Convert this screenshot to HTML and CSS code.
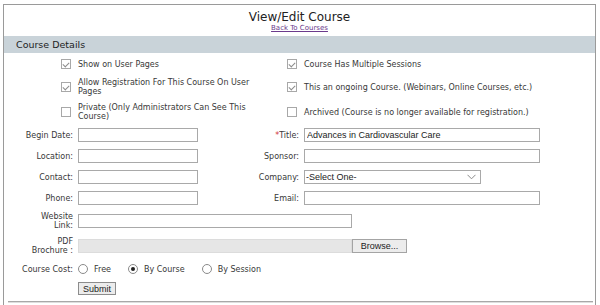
FILE: index.html
```html
<!DOCTYPE html>
<html lang="en">
<head>
    <meta charset="UTF-8">
    <title>View/Edit Course</title>
    <link rel="stylesheet" href="styles.css">
</head>
<body>
    <div class="panel">
        <div class="head">
            <h1>View/Edit Course</h1>
            <a href="#">Back To Courses</a>
        </div>
        <div class="band">Course Details</div>

        <form class="grid">
            <input type="checkbox" class="chk" checked>
            <label class="opt">Show on User Pages</label>
            <input type="checkbox" class="chk" checked>
            <label class="opt">Course Has Multiple Sessions</label>

            <input type="checkbox" class="chk" checked>
            <label class="opt">Allow Registration For This Course On User Pages</label>
            <input type="checkbox" class="chk" checked>
            <label class="opt">This an ongoing Course. (Webinars, Online Courses, etc.)</label>

            <input type="checkbox" class="chk">
            <label class="opt">Private (Only Administrators Can See This Course)</label>
            <input type="checkbox" class="chk">
            <label class="opt">Archived (Course is no longer available for registration.)</label>

            <label class="lbl">Begin Date:</label>
            <input type="text" class="txt short">
            <label class="lbl"><span class="req">*</span>Title:</label>
            <input type="text" class="txt long" value="Advances in Cardiovascular Care">

            <label class="lbl">Location:</label>
            <input type="text" class="txt short">
            <label class="lbl">Sponsor:</label>
            <input type="text" class="txt long">

            <label class="lbl">Contact:</label>
            <input type="text" class="txt short">
            <label class="lbl">Company:</label>
            <div class="sel">
                <select class="txt">
                    <option>-Select One-</option>
                </select>
                <svg class="chev" width="9" height="6" viewBox="0 0 9 6"><polyline points="0.5,0.8 4.5,4.8 8.5,0.8" fill="none" stroke="#8a8a8a" stroke-width="1"/></svg>
            </div>

            <label class="lbl">Phone:</label>
            <input type="text" class="txt short">
            <label class="lbl">Email:</label>
            <input type="text" class="txt long">

            <label class="lbl">Website<br>Link:</label>
            <div class="wide">
                <input type="text" class="txt web">
            </div>

            <label class="lbl">PDF<br>Brochure :</label>
            <div class="wide">
                <span class="file-bar"></span>
                <button type="button" class="browse">Browse...</button>
            </div>

            <label class="lbl">Course Cost:</label>
            <div class="wide radios">
                <input type="radio" name="cost" class="radio"><span class="rlbl">Free</span>
                <input type="radio" name="cost" class="radio" checked><span class="rlbl">By Course</span>
                <input type="radio" name="cost" class="radio"><span class="rlbl">By Session</span>
            </div>

            <span></span>
            <div class="wide">
                <button type="button" class="submit">Submit</button>
            </div>
        </form>

        <hr class="rule">
    </div>
</body>
</html>
```

FILE: styles.css
```css
* {
    box-sizing: border-box;
}
body {
    margin: 4px 4px 0 3px;
    background: #fff;
    color: #383838;
    font-family: "DejaVu Sans", Verdana, sans-serif;
    font-size: 8px;
}
.panel {
    border: 1px solid #9a9a9a;
    padding-bottom: 20px;
}

/* Header */
.head {
    text-align: center;
    padding: 5px 0 3px;
}
.head h1 {
    margin: 0;
    font-size: 12px;
    line-height: 14px;
    font-weight: normal;
    color: #222;
}
.head a {
    display: block;
    font-size: 7px;
    line-height: 9px;
    color: #6b3a8c;
}
.band {
    height: 17px;
    line-height: 17px;
    padding-left: 12px;
    background: #c9d3d9;
    color: #222;
    font-size: 9.5px;
}

/* Form grid */
.grid {
    display: grid;
    grid-template-columns: 69px 172px 44px 1fr;
    grid-auto-rows: minmax(14px, auto);
    column-gap: 5px;
    row-gap: 7px;
    align-items: center;
    padding-top: 4px;
    line-height: 9px;
}
.lbl {
    text-align: right;
    white-space: nowrap;
}
.req {
    color: #d0343c;
}
.chk {
    appearance: none;
    -webkit-appearance: none;
    justify-self: end;
    width: 10px;
    height: 10px;
    margin: 0 2px 0 0;
    border: 1px solid #a8a8a8;
    background: #fff;
}
.chk:checked::after {
    content: "";
    display: block;
    width: 3px;
    height: 5px;
    margin: 0.5px auto 0;
    border: solid #8c8c8c;
    border-width: 0 1px 1px 0;
    transform: rotate(45deg);
}

/* Fields */
.txt {
    height: 14px;
    margin: 0;
    padding: 0 2px;
    border: 1px solid #a9a9a9;
    background: #fff;
    color: #222;
    font-family: "Liberation Sans", Arial, sans-serif;
    font-size: 9px;
}
.short {
    width: 120px;
}
.long {
    width: 236px;
}
.web {
    width: 274px;
}
.sel {
    position: relative;
    width: 177px;
    height: 14px;
}
.sel select {
    appearance: none;
    -webkit-appearance: none;
    width: 177px;
    padding: 0 1px;
    border-radius: 0;
}
.chev {
    position: absolute;
    top: 4px;
    right: 5px;
}
.wide {
    grid-column: 2 / span 3;
    display: flex;
    align-items: center;
}
.file-bar {
    width: 274px;
    height: 14px;
    background: #e6e6e6;
    border: 1px solid #dcdcdc;
}
.browse,
.submit {
    height: 14px;
    margin: 0;
    padding: 0;
    border: 1px solid #a4a4a4;
    background: #ececec;
    color: #222;
    font-family: "Liberation Sans", Arial, sans-serif;
    font-size: 9px;
}
.browse {
    width: 55px;
}
.submit {
    width: 38px;
    height: 13px;
    margin-top: -3px;
    border-color: #8c8c8c;
}

/* Radios */
.radio {
    appearance: none;
    -webkit-appearance: none;
    width: 10px;
    height: 10px;
    margin: 0 6px 0 0;
    border: 1px solid #8a8a8a;
    border-radius: 50%;
    background: #fff;
}
.radio:checked::after {
    content: "";
    display: block;
    width: 4px;
    height: 4px;
    margin: 2px auto 0;
    border-radius: 50%;
    background: #222;
}
.rlbl {
    margin-right: 17px;
}

.rule {
    height: 0;
    margin: 4px 2px 0 4px;
    border: none;
    border-top: 1px solid #a8a8a8;
    border-bottom: 1px solid #dedede;
}
```
